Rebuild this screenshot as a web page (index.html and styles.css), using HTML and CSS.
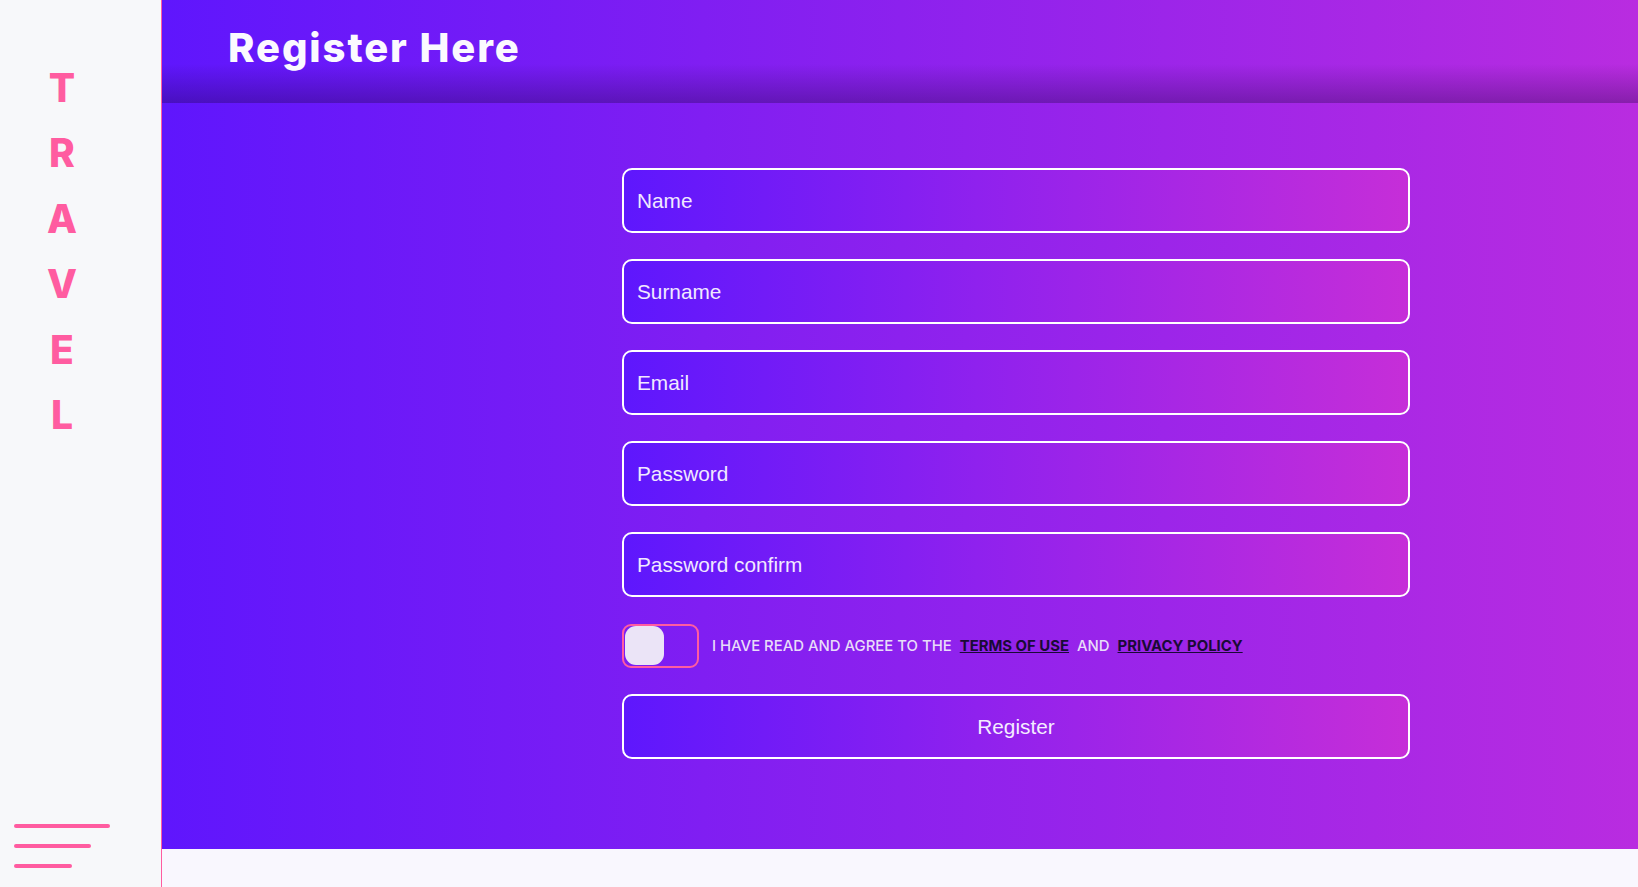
FILE: index.html
```html
<!DOCTYPE html>
<html lang="en">
<head>
<meta charset="utf-8">
<title>Register Here</title>
<link rel="stylesheet" href="styles.css">
</head>
<body>
<aside class="sidebar">
  <div class="brand">
    <span>T</span><span>R</span><span>A</span><span>V</span><span>E</span><span>L</span>
  </div>
  <div class="menu">
    <span class="bar bar-1"></span>
    <span class="bar bar-2"></span>
    <span class="bar bar-3"></span>
  </div>
</aside>
<main class="main">
  <section class="panel">
    <header class="topbar">
      <h1 class="title">Register Here</h1>
    </header>
    <form class="form">
      <input class="field" type="text" placeholder="Name">
      <input class="field" type="text" placeholder="Surname">
      <input class="field" type="email" placeholder="Email">
      <input class="field" type="password" placeholder="Password">
      <input class="field" type="password" placeholder="Password confirm">
      <label class="agree">
        <span class="toggle"><span class="knob"></span></span>
        <span class="agree-text">I have read and agree to the <a href="#" class="link">Terms of use</a> and <a href="#" class="link">Privacy policy</a></span>
      </label>
      <button class="field submit" type="button">Register</button>
    </form>
  </section>
</main>
</body>
</html>
```

FILE: styles.css
```css
* { box-sizing: border-box; }

html, body {
  margin: 0;
  height: 100%;
}

body {
  display: flex;
  height: 887px;
  overflow: hidden;
  background: #f9f7fe;
  font-family: "Inter", "Liberation Sans", sans-serif;
}

.sidebar {
  width: 162px;
  flex: 0 0 162px;
  background: #f7f8fa;
  border-right: 1px solid #ff5ca0;
  display: flex;
  flex-direction: column;
  justify-content: space-between;
}

.brand {
  width: 124px;
  padding-top: 55px;
  display: flex;
  flex-direction: column;
  align-items: center;
}

.brand span {
  color: #ff5ca0;
  font-family: "Inter", sans-serif;
  font-weight: 800;
  font-size: 39px;
  line-height: 65.4px;
}

.menu {
  display: flex;
  flex-direction: column;
  gap: 16px;
  padding: 0 0 19px 14px;
}

.bar {
  display: block;
  height: 4px;
  border-radius: 2px;
  background: #ff5ca0;
}
.bar-1 { width: 96px; }
.bar-2 { width: 77px; }
.bar-3 { width: 58px; }

.main {
  flex: 1;
  display: flex;
  flex-direction: column;
}

.panel {
  height: 849px;
  background: linear-gradient(to right, #5f16fd 0%, #8c21ee 50%, #b92ce0 100%);
}

.topbar {
  height: 103px;
  padding: 28px 0 0 66px;
  background: linear-gradient(to bottom, rgba(20, 0, 50, 0) 0%, rgba(20, 0, 50, 0) 62%, rgba(20, 0, 50, 0.3) 100%);
}

.title {
  margin: 0;
  color: #fbf9ff;
  font-family: "Inter", sans-serif;
  font-weight: 800;
  font-size: 40px;
  line-height: 40px;
  letter-spacing: 1.9px;
}

.form {
  width: 788px;
  margin: 65px 0 0 460px;
  display: flex;
  flex-direction: column;
  gap: 26px;
}

.field {
  display: block;
  width: 100%;
  height: 65px;
  padding: 0 13px;
  border: 2px solid #ffffff;
  border-radius: 10px;
  background: linear-gradient(to right, #5e17fd 0%, #8f21ee 45%, #c62ed8 100%);
  color: #f4edff;
  font-family: "Liberation Sans", Arial, sans-serif;
  font-size: 20.8px;
  outline: none;
}

.field::placeholder {
  color: #f1e9ff;
  opacity: 1;
}

.submit {
  text-align: center;
  cursor: pointer;
}

.agree {
  display: flex;
  align-items: center;
  gap: 13px;
  height: 45px;
}

.toggle {
  width: 77px;
  height: 44px;
  border: 2px solid #ff5ca0;
  border-radius: 9px;
  padding: 0;
  display: flex;
  align-items: center;
}

.knob {
  width: 39px;
  height: 39px;
  margin-left: 1px;
  border-radius: 11px;
  background: #ebe4f7;
}

.agree-text {
  color: #e8dcf9;
  font-family: "Inter", sans-serif;
  font-weight: 500;
  font-size: 14.9px;
  text-transform: uppercase;
  letter-spacing: 0;
}

.link {
  color: #1a0a36;
  font-weight: 700;
  text-decoration: underline;
  margin: 0 4px;
}
```
